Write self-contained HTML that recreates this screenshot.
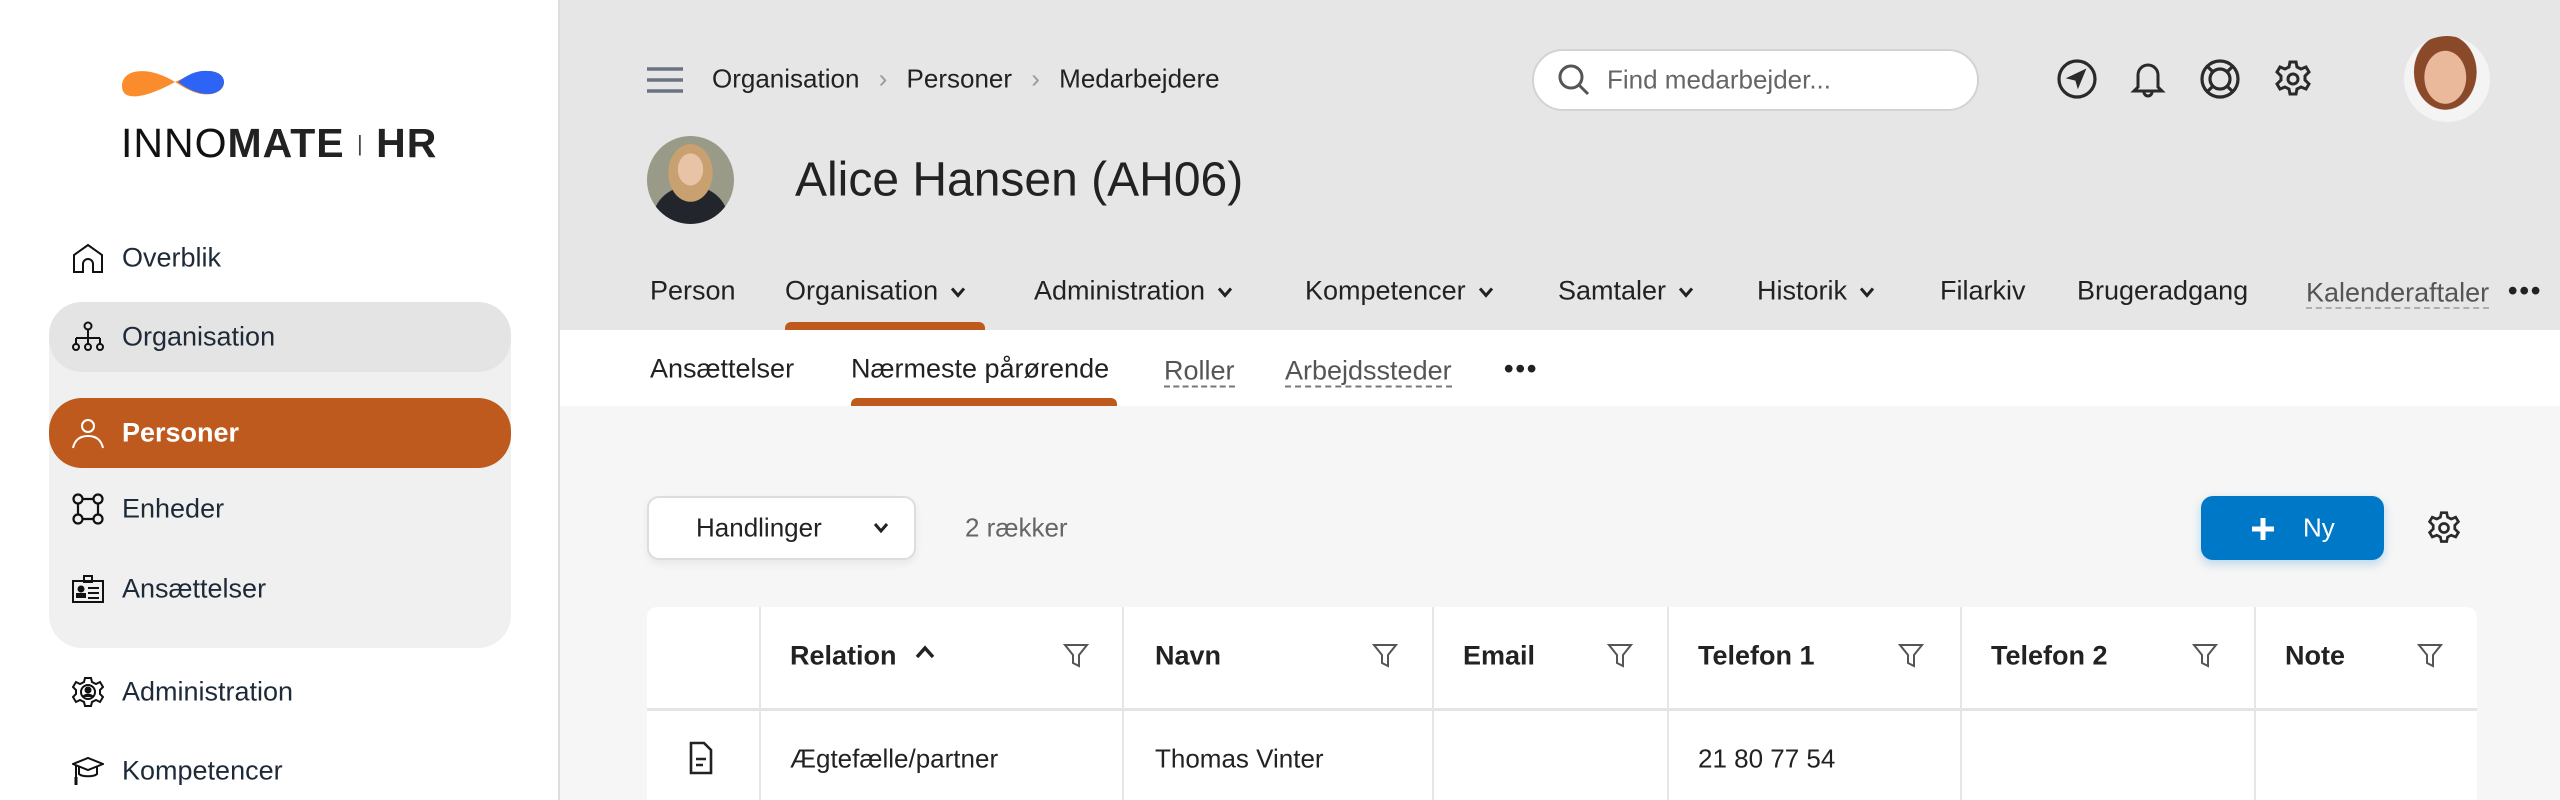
<!DOCTYPE html>
<html><head><meta charset="utf-8"><style>
*{box-sizing:border-box;margin:0;padding:0}
html{width:2560px;height:800px;overflow:hidden}
body{width:2560px;height:800px;overflow:hidden;font-family:"Liberation Sans",sans-serif;background:#f6f6f6;position:relative;color:#222}
.abs{position:absolute}
#side{left:0;top:0;width:560px;height:800px;background:#fff;border-right:2px solid #ddd}
.nav{position:absolute;left:122px;font-size:27px;color:#1e2a38;transform:translateY(-50%)}
.ic{position:absolute;left:72px;width:32px;height:32px;transform:translateY(-50%)}
#hdr{left:560px;top:0;width:2000px;height:330px;background:#e6e6e6}
#sub{left:560px;top:330px;width:2000px;height:76px;background:#fff}
.t{position:absolute;font-size:27px;color:#222;transform:translateY(-50%);white-space:nowrap}
.dash{border-bottom:2px dashed #777;color:#555}
.hd{position:absolute;font-size:27px;font-weight:bold;color:#222;transform:translateY(-50%)}
.fl{position:absolute;top:643px;width:26px;height:26px}
.vl{position:absolute;top:607px;height:193px;width:2px;background:#e6e6e6}
.cv{display:inline-block;width:16px;height:12px;margin-left:12px;vertical-align:middle}
</style></head><body>
<div id="side" class="abs">
<svg class="abs" style="left:120px;top:62px" width="106" height="48" viewBox="0 0 106 48"><path d="M2 24C2 6 30 4 55 20 68 28 78 34 92 32 100 30 104 26 104 20 104 14 98 9 88 9 76 9 64 16 55 20 30 34 2 42 2 24Z" fill="#fb8c2c"/><path d="M58 20C68 12 78 8 88 9 98 9 104 14 104 20 104 26 98 32 88 32 76 32 66 26 58 20Z" fill="#2d64f5"/></svg>
<div class="abs" style="left:121px;top:120px;font-size:41px;letter-spacing:1px;color:#111;white-space:nowrap"><span style="font-weight:300">INNO</span><span style="font-weight:bold;color:#222">MATE</span> <span style="font-size:22px;vertical-align:6px;color:#444">|</span> <span style="font-weight:bold;color:#222">HR</span></div>
<div class="abs" style="left:49px;top:302px;width:462px;height:346px;background:#f0f0f0;border-radius:33px"></div>
<div class="abs" style="left:49px;top:302px;width:462px;height:70px;background:#e4e4e4;border-radius:33px"></div>
<div class="abs" style="left:49px;top:398px;width:462px;height:70px;background:#bf5a1e;border-radius:33px"></div>
<svg class="ic" style="top:258px" viewBox="0 0 32 32" fill="none" stroke="#111" stroke-width="2"><path d="M2 30V13L16 3 30 13V30H21V22A5 5 0 0 0 11 22V30Z"/></svg>
<div class="nav" style="top:258px">Overblik</div>
<svg class="ic" style="top:337px" viewBox="0 0 32 32" fill="none" stroke="#111" stroke-width="2"><circle cx="16" cy="5" r="3.5"/><path d="M16 9v8M4 17h24M4 17v6M16 17v6M28 17v6"/><circle cx="4" cy="26" r="3"/><circle cx="16" cy="26" r="3"/><circle cx="28" cy="26" r="3"/></svg>
<div class="nav" style="top:337px">Organisation</div>
<svg class="ic" style="top:433px" viewBox="0 0 32 32" fill="none" stroke="#fff" stroke-width="2"><circle cx="16" cy="9" r="6"/><path d="M1 31C3 22 9 19 16 19S29 22 31 31"/></svg>
<div class="nav" style="top:433px;color:#fff;font-weight:bold">Personer</div>
<svg class="ic" style="top:509px" viewBox="0 0 32 32" fill="none" stroke="#111" stroke-width="2.2"><circle cx="6" cy="6" r="4.5"/><circle cx="26" cy="6" r="4.5"/><circle cx="6" cy="26" r="4.5"/><circle cx="26" cy="26" r="4.5"/><path d="M10.5 6h11M10.5 26h11M6 10.5v11M26 10.5v11"/></svg>
<div class="nav" style="top:509px">Enheder</div>
<svg class="ic" style="top:589px" viewBox="0 0 32 32" fill="none" stroke="#111" stroke-width="2"><rect x="1" y="8" width="30" height="21"/><rect x="12" y="3" width="8" height="6"/><circle cx="9" cy="16" r="2.5" fill="#111"/><path d="M5 24h8v-3H5z" fill="#111"/><path d="M16 15h11M16 20h11M16 25h11"/></svg>
<div class="nav" style="top:589px">Ansættelser</div>
<svg class="ic" style="top:692px" viewBox="0 0 32 32" fill="none" stroke="#111" stroke-width="2"><path d="M13 2h6l1 4 4 2 4-2 3 5-3 3v4l3 3-3 5-4-2-4 2-1 4h-6l-1-4-4-2-4 2-3-5 3-3v-4L1 11l3-5 4 2 4-2z"/><circle cx="16" cy="16" r="7"/><circle cx="16" cy="14" r="2.5" fill="#111"/><path d="M11 21c2-3 8-3 10 0" fill="#111"/></svg>
<div class="nav" style="top:692px">Administration</div>
<svg class="ic" style="top:771px" viewBox="0 0 32 32" fill="none" stroke="#111" stroke-width="2"><path d="M1 9L16 3 31 9 16 15Z"/><path d="M7 12v7c3 3 15 3 18 0v-7M4 10v12"/><path d="M4 22v8" stroke-width="3"/></svg>
<div class="nav" style="top:771px">Kompetencer</div>
</div>

<div id="hdr" class="abs"></div>
<div id="sub" class="abs"></div>
<svg class="abs" style="left:647px;top:67px" width="36" height="26" viewBox="0 0 36 26"><path d="M0 2h36M0 13h36M0 24h36" stroke="#6b7280" stroke-width="3.5"/></svg>
<div class="t" style="left:712px;top:79px;font-size:26px">Organisation <span style="color:#999;margin:0 12px">›</span> Personer <span style="color:#999;margin:0 12px">›</span> Medarbejdere</div>
<div class="abs" style="left:1532px;top:49px;width:447px;height:62px;background:#fff;border:2px solid #d3d3d3;border-radius:31px"></div>
<svg class="abs" style="left:1557px;top:63px" width="34" height="34" viewBox="0 0 34 34" fill="none" stroke="#555" stroke-width="3"><circle cx="14" cy="14" r="11"/><path d="M22 22l9 9"/></svg>
<div class="t" style="left:1607px;top:80px;font-size:26px;color:#666">Find medarbejder...</div>
<svg class="abs" style="left:2057px;top:59px" width="40" height="40" viewBox="0 0 40 40" fill="none" stroke="#2a2a2a" stroke-width="3.2"><circle cx="20" cy="20" r="18"/><path d="M11 19l17-8-7 17-2-7z" fill="#2a2a2a" stroke-width="1.5"/></svg>
<svg class="abs" style="left:2130px;top:59px" width="36" height="42" viewBox="0 0 36 42" fill="none" stroke="#2a2a2a" stroke-width="3"><path d="M8 28V16a10 10 0 0 1 20 0v12l4 4H4z"/><path d="M14 33a4 4 0 0 0 8 0"/></svg>
<svg class="abs" style="left:2200px;top:59px" width="40" height="40" viewBox="0 0 40 40" fill="none" stroke="#2a2a2a" stroke-width="3.2"><circle cx="20" cy="20" r="18"/><circle cx="20" cy="20" r="10"/><path d="M8 8l5 5M32 8l-5 5M8 32l5-5M32 32l-5-5"/></svg>
<svg class="abs" style="left:2273px;top:59px" width="40" height="40" viewBox="0 0 40 40" fill="none" stroke="#2a2a2a" stroke-width="3"><path d="M17 3h6l1 5 4 2 5-2 3 5-4 4v4l4 4-3 5-5-2-4 2-1 5h-6l-1-5-4-2-5 2-3-5 4-4v-4L4 13l3-5 5 2 4-2z"/><circle cx="20" cy="20" r="5"/></svg>
<div class="abs" style="left:2404px;top:36px;width:86px;height:86px;border-radius:50%;background:radial-gradient(ellipse 30% 38% at 48% 48%,#eab99c 0 80%,transparent 82%),radial-gradient(ellipse 40% 48% at 48% 42%,#8a4a2a 0 90%,transparent 92%),#f4f4f4"></div>
<div class="abs" style="left:647px;top:136px;width:87px;height:88px;border-radius:50%;background:radial-gradient(ellipse 16% 20% at 50% 38%,#e8c3a6 0 90%,transparent 92%),radial-gradient(ellipse 28% 36% at 50% 42%,#c9a070 0 90%,transparent 92%),radial-gradient(ellipse 45% 40% at 50% 95%,#22252c 0 95%,transparent 97%),#9a9a88"></div>
<div class="t" style="left:795px;top:180px;font-size:48px;color:#222">Alice Hansen (AH06)</div>

<div class="t" style="left:650px;top:291px">Person</div>
<div class="t" style="left:785px;top:291px">Organisation<svg class="cv" viewBox="0 0 16 12"><path d="M2 2l6 7 6-7" stroke="#222" stroke-width="3" fill="none"/></svg></div>
<div class="t" style="left:1034px;top:291px">Administration<svg class="cv" viewBox="0 0 16 12"><path d="M2 2l6 7 6-7" stroke="#222" stroke-width="3" fill="none"/></svg></div>
<div class="t" style="left:1305px;top:291px">Kompetencer<svg class="cv" viewBox="0 0 16 12"><path d="M2 2l6 7 6-7" stroke="#222" stroke-width="3" fill="none"/></svg></div>
<div class="t" style="left:1558px;top:291px">Samtaler<svg class="cv" viewBox="0 0 16 12"><path d="M2 2l6 7 6-7" stroke="#222" stroke-width="3" fill="none"/></svg></div>
<div class="t" style="left:1757px;top:291px">Historik<svg class="cv" viewBox="0 0 16 12"><path d="M2 2l6 7 6-7" stroke="#222" stroke-width="3" fill="none"/></svg></div>
<div class="t" style="left:1940px;top:291px">Filarkiv</div>
<div class="t" style="left:2077px;top:291px">Brugeradgang</div>
<div class="t" style="left:2306px;top:293px;width:184px;overflow:hidden"><span class="dash">Kalenderaftaler</span></div>
<div class="t" style="left:2508px;top:291px;font-weight:bold;letter-spacing:2px">•••</div>
<div class="abs" style="left:785px;top:322px;width:200px;height:8px;background:#bf5a1e;border-radius:6px 6px 0 0"></div>

<div class="t" style="left:650px;top:369px">Ansættelser</div>
<div class="t" style="left:851px;top:369px">Nærmeste pårørende</div>
<div class="t" style="left:1164px;top:371px"><span class="dash">Roller</span></div>
<div class="t" style="left:1285px;top:371px"><span class="dash">Arbejdssteder</span></div>
<div class="t" style="left:1504px;top:369px;font-weight:bold;letter-spacing:2px">•••</div>
<div class="abs" style="left:851px;top:398px;width:266px;height:8px;background:#bf5a1e;border-radius:6px 6px 0 0"></div>

<div class="abs" style="left:647px;top:496px;width:269px;height:64px;background:#fff;border:2px solid #ddd;border-radius:12px;box-shadow:0 4px 8px rgba(0,0,0,.06)"></div>
<div class="t" style="left:696px;top:528px;font-size:26px">Handlinger</div>
<svg class="abs" style="left:873px;top:522px" width="16" height="12" viewBox="0 0 16 12"><path d="M2 2l6 7 6-7" stroke="#222" stroke-width="3" fill="none"/></svg>
<div class="t" style="left:965px;top:528px;font-size:26px;color:#666">2 rækker</div>
<div class="abs" style="left:2201px;top:496px;width:183px;height:64px;background:#0078c8;border-radius:12px;box-shadow:0 4px 10px rgba(0,120,200,.25)"></div>
<svg class="abs" style="left:2252px;top:518px" width="22" height="22" viewBox="0 0 22 22"><path d="M11 0v22M0 11h22" stroke="#fff" stroke-width="5"/></svg>
<div class="t" style="left:2303px;top:528px;font-size:26px;color:#fff">Ny</div>
<svg class="abs" style="left:2426px;top:510px" width="36" height="36" viewBox="0 0 40 40" fill="none" stroke="#2a2a2a" stroke-width="3"><path d="M17 3h6l1 5 4 2 5-2 3 5-4 4v4l4 4-3 5-5-2-4 2-1 5h-6l-1-5-4-2-5 2-3-5 4-4v-4L4 13l3-5 5 2 4-2z"/><circle cx="20" cy="20" r="5"/></svg>

<div class="abs" style="left:647px;top:607px;width:1830px;height:193px;background:#fff;border-radius:10px 10px 0 0"></div>
<div class="abs" style="left:647px;top:708px;width:1830px;height:3px;background:#e4e4e4"></div>
<div class="vl" style="left:759px"></div><div class="vl" style="left:1122px"></div><div class="vl" style="left:1432px"></div><div class="vl" style="left:1667px"></div><div class="vl" style="left:1960px"></div><div class="vl" style="left:2254px"></div>
<div class="hd" style="left:790px;top:656px">Relation</div>
<svg class="abs" style="left:915px;top:645px" width="20" height="14" viewBox="0 0 20 14"><path d="M2 12l8-9 8 9" stroke="#222" stroke-width="3.5" fill="none"/></svg>
<div class="hd" style="left:1155px;top:656px">Navn</div>
<div class="hd" style="left:1463px;top:656px">Email</div>
<div class="hd" style="left:1698px;top:656px">Telefon 1</div>
<div class="hd" style="left:1991px;top:656px">Telefon 2</div>
<div class="hd" style="left:2285px;top:656px">Note</div>
<svg class="fl" style="left:1063px" viewBox="0 0 26 26" fill="none" stroke="#555" stroke-width="2"><path d="M2 2h22l-8 10v11l-6-3v-8z"/></svg>
<svg class="fl" style="left:1372px" viewBox="0 0 26 26" fill="none" stroke="#555" stroke-width="2"><path d="M2 2h22l-8 10v11l-6-3v-8z"/></svg>
<svg class="fl" style="left:1607px" viewBox="0 0 26 26" fill="none" stroke="#555" stroke-width="2"><path d="M2 2h22l-8 10v11l-6-3v-8z"/></svg>
<svg class="fl" style="left:1898px" viewBox="0 0 26 26" fill="none" stroke="#555" stroke-width="2"><path d="M2 2h22l-8 10v11l-6-3v-8z"/></svg>
<svg class="fl" style="left:2192px" viewBox="0 0 26 26" fill="none" stroke="#555" stroke-width="2"><path d="M2 2h22l-8 10v11l-6-3v-8z"/></svg>
<svg class="fl" style="left:2417px" viewBox="0 0 26 26" fill="none" stroke="#555" stroke-width="2"><path d="M2 2h22l-8 10v11l-6-3v-8z"/></svg>
<svg class="abs" style="left:688px;top:741px" width="26" height="34" viewBox="0 0 26 34" fill="none" stroke="#222" stroke-width="2.6"><path d="M3 2h13l7 7v23H3z"/><path d="M8 18h10M8 24h7"/></svg>
<div class="t" style="left:790px;top:759px;font-size:26px">Ægtefælle/partner</div>
<div class="t" style="left:1155px;top:759px;font-size:26px">Thomas Vinter</div>
<div class="t" style="left:1698px;top:759px;font-size:26px">21 80 77 54</div>
</body></html>
